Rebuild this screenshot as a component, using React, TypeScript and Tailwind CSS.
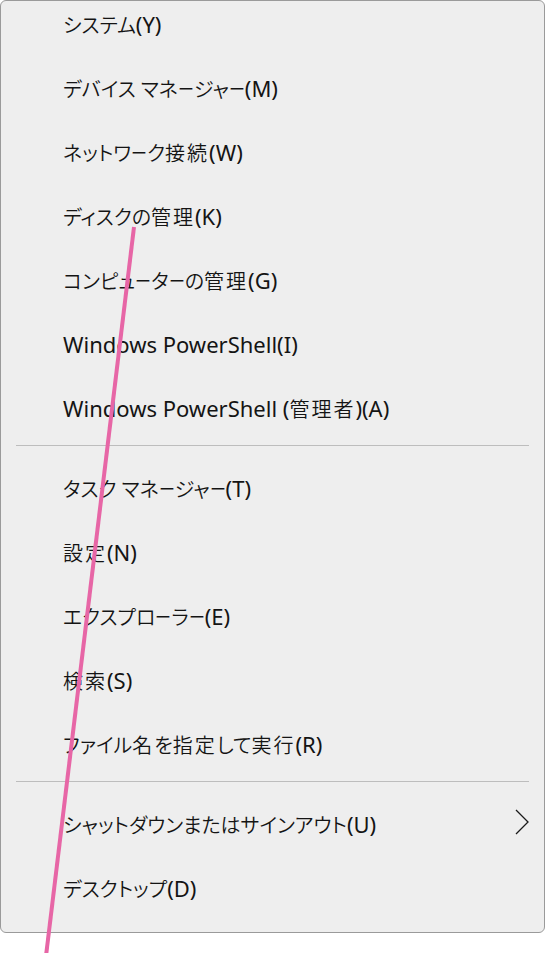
import React from "react";

type Item = { label: string; sub?: boolean };

const groups: Item[][] = [
  [
    { label: "システム(Y)" },
    { label: "デバイス マネージャー(M)" },
    { label: "ネットワーク接続(W)" },
    { label: "ディスクの管理(K)" },
    { label: "コンピューターの管理(G)" },
    { label: "Windows PowerShell(I)" },
    { label: "Windows PowerShell (管理者)(A)" },
  ],
  [
    { label: "タスク マネージャー(T)" },
    { label: "設定(N)" },
    { label: "エクスプローラー(E)" },
    { label: "検索(S)" },
    { label: "ファイル名を指定して実行(R)" },
  ],
  [
    { label: "シャットダウンまたはサインアウト(U)", sub: true },
    { label: "デスクトップ(D)" },
  ],
];

function kind(ch: string): "K" | "L" | "J" | "D" {
  const c = ch.charCodeAt(0);
  if (c >= 0x4e00 && c <= 0x9fff) return "K";
  if (c === 0x30fc) return "D";
  if (c >= 0x20 && c <= 0x7e) return "L";
  return "J";
}

function Label({ text }: { text: string }) {
  const runs: { k: string; t: string }[] = [];
  for (const ch of Array.from(text)) {
    let k: string = kind(ch);
    if (ch === " " && runs.length && runs[runs.length - 1].k !== "L") k = "J";
    const last = runs[runs.length - 1];
    if (k !== "D" && last && last.k === k) last.t += ch;
    else runs.push({ k, t: ch });
  }
  return (
    <span className="whitespace-nowrap">
      {runs.map((r, i) =>
        r.k === "L" ? (
          <span key={i} className="text-[22px] font-normal">{r.t}</span>
        ) : r.k === "K" ? (
          <span key={i} className="text-[20px] tracking-[2px]">{r.t}</span>
        ) : r.k === "D" ? (
          <span key={i} className="inline-block w-[16px] text-[20px]">
            <span className="inline-block origin-left scale-x-[0.8]">{r.t}</span>
          </span>
        ) : (
          <span key={i} className="text-[20px]">{r.t}</span>
        )
      )}
    </span>
  );
}

function Row({ item }: { item: Item }) {
  return (
    <div className="h-[64px] flex items-center justify-between pl-[62px] pr-[15px]">
      <Label text={item.label} />
      {item.sub && (
        <svg width="14" height="26" viewBox="0 0 14 26" className="mt-[-6px]">
          <path d="M1 1 L13 13 L1 25" fill="none" stroke="#1a1a1a" strokeWidth="1.3" />
        </svg>
      )}
    </div>
  );
}

export default function App() {
  return (
    <div
      className="relative w-[545px] h-[953px] bg-white overflow-hidden text-[20px] leading-[28px] font-[350] text-[#141414] [font-feature-settings:'palt']"
      style={{ fontFamily: '"Noto Sans", "Noto Sans CJK JP", sans-serif' }}
    >
      <div className="h-[933px] border border-[#9a9a9a] rounded-[6px] bg-[#eeeeee] overflow-hidden">
        <div className="-mt-[8px] flex flex-col">
          {groups.map((g, gi) => (
            <React.Fragment key={gi}>
              {gi > 0 && <div className="mx-[15px] mt-[4px] mb-[11px] h-px bg-[#bdbdbd]" />}
              {g.map((it, i) => (
                <Row key={i} item={it} />
              ))}
            </React.Fragment>
          ))}
        </div>
      </div>
      <svg className="absolute inset-0 pointer-events-none" width="545" height="953">
        <line x1="134" y1="227" x2="46" y2="956" stroke="#e766a6" strokeWidth="4" />
      </svg>
    </div>
  );
}
